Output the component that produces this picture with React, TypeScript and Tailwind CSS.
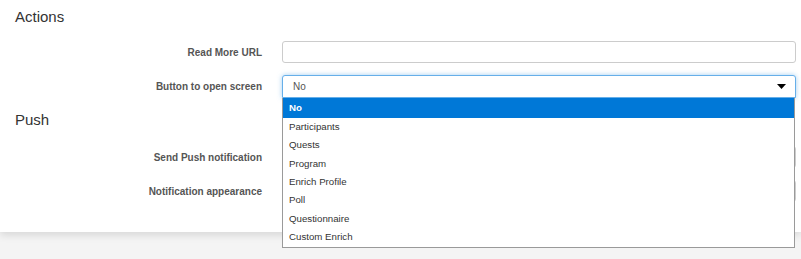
const options = [
  "Participants",
  "Quests",
  "Program",
  "Enrich Profile",
  "Poll",
  "Questionnaire",
  "Custom Enrich",
];

function Row({
  label,
  children,
  className = "",
}: {
  label: string;
  children: React.ReactNode;
  className?: string;
}) {
  return (
    <div className={`flex items-center ${className}`}>
      <label className="w-[282px] shrink-0 pr-[20px] text-right text-[10px] font-bold text-[#555]">
        {label}
      </label>
      <div className="relative flex-1 pr-[5px]">{children}</div>
    </div>
  );
}

function TextInput() {
  return (
    <div className="h-[22px] w-full rounded-[3px] border border-[#ccc] bg-white" />
  );
}

export default function App() {
  return (
    <div
      className="h-[259px] w-full overflow-hidden bg-[#f4f4f4]"
      style={{ fontFamily: '"Liberation Sans", Arial, sans-serif' }}
    >
      <div className="relative h-[232px] bg-white pt-[7px] shadow-[0_3px_8px_rgba(0,0,0,0.12)]">
        <h2 className="pl-[15px] text-[15px] leading-[20px] text-[#333]">Actions</h2>

        <Row label="Read More URL" className="mt-[14px]">
          <TextInput />
        </Row>

        <Row label="Button to open screen" className="mt-[12px]">
          <div className="relative z-10 flex h-[23px] w-full items-center rounded-t-[3px] border border-[#66afe9] bg-white pl-[10px] pr-[9px] shadow-[0_0_5px_rgba(102,175,233,0.6)]">
            <span className="text-[10px] text-[#555]">No</span>
            <svg className="ml-auto" width="9" height="5" viewBox="0 0 9 5">
              <path d="M0 0h9L4.5 5z" fill="#000" />
            </svg>
          </div>
          {/* open native list */}
          <div className="absolute left-0 right-[6px] top-[23px] z-20 border border-t-0 border-[#9a9a9a] bg-white text-[9.7px] text-[#333]">
            <div className="flex h-[20px] items-center bg-[#0078d7] pl-[6px] font-bold text-white">
              No
            </div>
            {options.map((o) => (
              <div key={o} className="flex h-[18.4px] items-center pl-[6px]">
                {o}
              </div>
            ))}
          </div>
        </Row>

        <h2 className="mt-[12px] pl-[15px] text-[15px] leading-[20px] text-[#333]">Push</h2>

        <Row label="Send Push notification" className="mt-[16px]">
          <TextInput />
        </Row>

        <Row label="Notification appearance" className="mt-[12px]">
          <TextInput />
        </Row>
      </div>
    </div>
  );
}
